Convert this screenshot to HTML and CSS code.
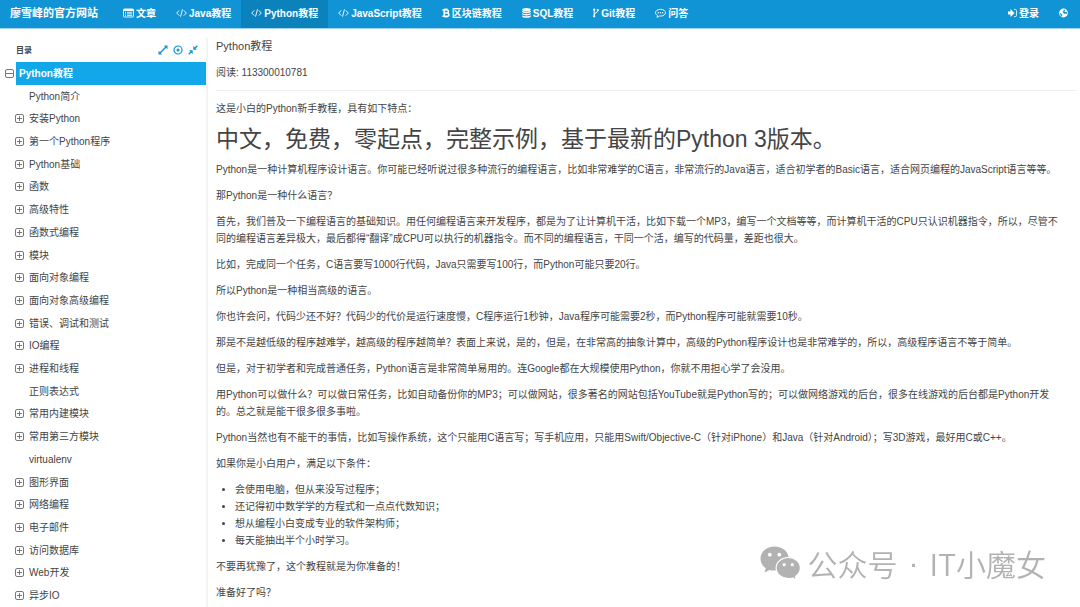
FILE: index.html
```html
<!DOCTYPE html>
<html lang="zh-CN">
<head>
    <meta charset="UTF-8">
    <meta name="viewport" content="width=device-width, initial-scale=1.0">
    <title>Python教程 - 廖雪峰的官方网站</title>
    <link rel="stylesheet" href="styles.css">
</head>
<body>
    <!-- Icon definitions -->
    <svg class="icon-defs" aria-hidden="true">
        <symbol id="icon-plus" viewBox="0 0 9 9">
            <rect x="0.5" y="0.5" width="8" height="8" rx="1.5" fill="none" stroke="currentColor"/>
            <path d="M2 4.5h5M4.5 2v5" stroke="currentColor"/>
        </symbol>
        <symbol id="icon-minus" viewBox="0 0 9 9">
            <rect x="0.5" y="0.5" width="8" height="8" rx="1.5" fill="none" stroke="currentColor"/>
            <path d="M1 4.5h7" stroke="currentColor"/>
        </symbol>
        <symbol id="icon-code" viewBox="0 0 11 10">
            <path d="M3.2 2.4L0.7 5l2.5 2.6M7.8 2.4L10.3 5L7.8 7.6M6.5 1.3l-2 7.4" fill="none" stroke="currentColor" stroke-width="0.9"/>
        </symbol>
    </svg>

    <header class="navbar">
        <a href="#" class="brand">廖雪峰的官方网站</a>
        <nav class="nav">
            <a href="#" class="nav-link">
                <svg class="icon" width="11" height="10" viewBox="0 0 11 10"><rect x="0.5" y="1" width="10" height="8" rx="0.8" fill="none" stroke="currentColor" stroke-width="0.9"/><path d="M0.5 2h10" stroke="currentColor" stroke-width="2"/><path d="M2 4.4h1M2 5.9h1M2 7.4h1M4 4.4h5.2M4 5.9h5.2M4 7.4h5.2" stroke="currentColor" stroke-width="0.8"/></svg>
                文章
            </a>
            <a href="#" class="nav-link"><svg class="icon" width="11" height="10"><use href="#icon-code"/></svg>Java教程</a>
            <a href="#" class="nav-link active"><svg class="icon" width="11" height="10"><use href="#icon-code"/></svg>Python教程</a>
            <a href="#" class="nav-link"><svg class="icon" width="11" height="10"><use href="#icon-code"/></svg>JavaScript教程</a>
            <a href="#" class="nav-link">
                <svg class="icon" width="8" height="10" viewBox="0 0 8 10"><path d="M0.4 2h4.2c2.5 0 2.5 2.8 0.3 3c2.7 0.1 2.7 3.3 0 3.3H0.4M2.2 2v6M2.4 5h2.6M3 0.5v1.5M4.8 0.5v1.5M3 8v1.6M4.8 8v1.6" fill="none" stroke="currentColor" stroke-width="1.5"/></svg>
                区块链教程
            </a>
            <a href="#" class="nav-link">
                <svg class="icon" width="9" height="10" viewBox="0 0 9 10"><ellipse cx="4.5" cy="1.6" rx="4.3" ry="1.6" fill="currentColor"/><path d="M0.2 2.6c1.6 1.4 7 1.4 8.6 0v1.2c0 1.9-8.6 1.9-8.6 0zM0.2 4.9c1.6 1.4 7 1.4 8.6 0v1.2c0 1.9-8.6 1.9-8.6 0zM0.2 7.2c1.6 1.4 7 1.4 8.6 0v1.2c0 1.9-8.6 1.9-8.6 0z" fill="currentColor"/></svg>
                SQL教程
            </a>
            <a href="#" class="nav-link">
                <svg class="icon" width="6" height="10" viewBox="0 0 6 10"><path d="M1.2 2v6M4.8 2.2c0 3-3.6 2.3-3.6 4.7" fill="none" stroke="currentColor" stroke-width="1"/><circle cx="1.2" cy="1.7" r="1.1" fill="currentColor"/><circle cx="4.8" cy="2" r="1.1" fill="currentColor"/><circle cx="1.2" cy="8.3" r="1.1" fill="currentColor"/></svg>
                Git教程
            </a>
            <a href="#" class="nav-link">
                <svg class="icon" width="11" height="10" viewBox="0 0 11 10"><path d="M5.5 1.3c2.8 0 5 1.5 5 3.4s-2.2 3.4-5 3.4l-1-0.1C3.7 8.7 2.8 9 1.8 9.2c0.5-0.5 0.8-1 0.8-1.7C1.3 6.9 0.5 5.9 0.5 4.7c0-1.9 2.2-3.4 5-3.4z" fill="none" stroke="currentColor" stroke-width="0.9"/><circle cx="3.3" cy="4.7" r="0.7" fill="currentColor"/><circle cx="5.5" cy="4.7" r="0.7" fill="currentColor"/><circle cx="7.7" cy="4.7" r="0.7" fill="currentColor"/></svg>
                问答
            </a>
        </nav>
        <nav class="nav nav-right">
            <a href="#" class="nav-link">
                <svg class="icon" width="9" height="10" viewBox="0 0 9 10"><path d="M0 3.4h2.5V1L6.5 5L2.5 9V6.6H0z" fill="currentColor"/><path d="M6 1.4h1.2c0.9 0 1.3 0.4 1.3 1.3v4.6c0 0.9-0.4 1.3-1.3 1.3H6" fill="none" stroke="currentColor" stroke-width="0.8"/></svg>
                登录
            </a>
            <a href="#" class="nav-link" aria-label="Language">
                <svg class="icon" width="9" height="10" viewBox="0 0 9 10"><circle cx="4.5" cy="5" r="4.4" fill="currentColor"/><path d="M5.3 1.5l1 0.6l-0.9 1.3l0.5 0.7l1.5-0.3l0.7 0.9l-0.3 1.2l-1.3-0.5l-1.6 0.6l-0.2-1l-1-0.6l0.7-1.7zM0.9 4.7l1.6 1l0.9 1.2l-0.5 1.5l-1.4-1.1z" class="globe-sea"/></svg>
            </a>
        </nav>
    </header>

    <div class="page">
        <aside class="sidebar">
            <div class="sidebar-header">
                <h4>目录</h4>
                <button type="button" class="tool" aria-label="展开">
                    <svg width="10" height="10" viewBox="0 0 10 10"><path d="M2 8l6-6" stroke="currentColor" stroke-width="1.4"/><path d="M5.8 0.5h3.7v3.7zM0.5 5.8v3.7h3.7z" fill="currentColor"/></svg>
                </button>
                <button type="button" class="tool" aria-label="定位">
                    <svg width="10" height="10" viewBox="0 0 10 10"><circle cx="5" cy="5" r="4" fill="none" stroke="currentColor" stroke-width="1.2"/><circle cx="5" cy="5" r="1.5" fill="currentColor"/></svg>
                </button>
                <button type="button" class="tool" aria-label="收起">
                    <svg width="10" height="10" viewBox="0 0 10 10"><path d="M0.7 9.3l3-3M9.3 0.7l-3 3" stroke="currentColor" stroke-width="1.4"/><path d="M5.3 1v3.7H9zM1 5.3h3.7V9z" fill="currentColor"/></svg>
                </button>
            </div>
            <ul class="tree">
                <li class="root"><button type="button" class="toggle" aria-label="收起"><svg width="9" height="9"><use href="#icon-minus"/></svg></button><a href="#">Python教程</a></li>
                <li class="leaf"><a href="#">Python简介</a></li>
                <li><button type="button" class="toggle" aria-label="展开"><svg width="9" height="9"><use href="#icon-plus"/></svg></button><a href="#">安装Python</a></li>
                <li><button type="button" class="toggle" aria-label="展开"><svg width="9" height="9"><use href="#icon-plus"/></svg></button><a href="#">第一个Python程序</a></li>
                <li><button type="button" class="toggle" aria-label="展开"><svg width="9" height="9"><use href="#icon-plus"/></svg></button><a href="#">Python基础</a></li>
                <li><button type="button" class="toggle" aria-label="展开"><svg width="9" height="9"><use href="#icon-plus"/></svg></button><a href="#">函数</a></li>
                <li><button type="button" class="toggle" aria-label="展开"><svg width="9" height="9"><use href="#icon-plus"/></svg></button><a href="#">高级特性</a></li>
                <li><button type="button" class="toggle" aria-label="展开"><svg width="9" height="9"><use href="#icon-plus"/></svg></button><a href="#">函数式编程</a></li>
                <li><button type="button" class="toggle" aria-label="展开"><svg width="9" height="9"><use href="#icon-plus"/></svg></button><a href="#">模块</a></li>
                <li><button type="button" class="toggle" aria-label="展开"><svg width="9" height="9"><use href="#icon-plus"/></svg></button><a href="#">面向对象编程</a></li>
                <li><button type="button" class="toggle" aria-label="展开"><svg width="9" height="9"><use href="#icon-plus"/></svg></button><a href="#">面向对象高级编程</a></li>
                <li><button type="button" class="toggle" aria-label="展开"><svg width="9" height="9"><use href="#icon-plus"/></svg></button><a href="#">错误、调试和测试</a></li>
                <li><button type="button" class="toggle" aria-label="展开"><svg width="9" height="9"><use href="#icon-plus"/></svg></button><a href="#">IO编程</a></li>
                <li><button type="button" class="toggle" aria-label="展开"><svg width="9" height="9"><use href="#icon-plus"/></svg></button><a href="#">进程和线程</a></li>
                <li class="leaf"><a href="#">正则表达式</a></li>
                <li><button type="button" class="toggle" aria-label="展开"><svg width="9" height="9"><use href="#icon-plus"/></svg></button><a href="#">常用内建模块</a></li>
                <li><button type="button" class="toggle" aria-label="展开"><svg width="9" height="9"><use href="#icon-plus"/></svg></button><a href="#">常用第三方模块</a></li>
                <li class="leaf"><a href="#">virtualenv</a></li>
                <li><button type="button" class="toggle" aria-label="展开"><svg width="9" height="9"><use href="#icon-plus"/></svg></button><a href="#">图形界面</a></li>
                <li><button type="button" class="toggle" aria-label="展开"><svg width="9" height="9"><use href="#icon-plus"/></svg></button><a href="#">网络编程</a></li>
                <li><button type="button" class="toggle" aria-label="展开"><svg width="9" height="9"><use href="#icon-plus"/></svg></button><a href="#">电子邮件</a></li>
                <li><button type="button" class="toggle" aria-label="展开"><svg width="9" height="9"><use href="#icon-plus"/></svg></button><a href="#">访问数据库</a></li>
                <li><button type="button" class="toggle" aria-label="展开"><svg width="9" height="9"><use href="#icon-plus"/></svg></button><a href="#">Web开发</a></li>
                <li><button type="button" class="toggle" aria-label="展开"><svg width="9" height="9"><use href="#icon-plus"/></svg></button><a href="#">异步IO</a></li>
            </ul>
        </aside>

        <main class="content">
            <h4 class="title">Python教程</h4>
            <p>阅读: 113300010781</p>
            <hr>
            <article class="article">
                <p>这是小白的Python新手教程，具有如下特点：</p>
                <h1>中文，免费，零起点，完整示例，基于最新的Python 3版本。</h1>
                <p>Python是一种计算机程序设计语言。你可能已经听说过很多种流行的编程语言，比如非常难学的C语言，非常流行的Java语言，适合初学者的Basic语言，适合网页编程的JavaScript语言等等。</p>
                <p>那Python是一种什么语言？</p>
                <p>首先，我们普及一下编程语言的基础知识。用任何编程语言来开发程序，都是为了让计算机干活，比如下载一个MP3，编写一个文档等等，而计算机干活的CPU只认识机器指令，所以，尽管不同的编程语言差异极大，最后都得“翻译”成CPU可以执行的机器指令。而不同的编程语言，干同一个活，编写的代码量，差距也很大。</p>
                <p>比如，完成同一个任务，C语言要写1000行代码，Java只需要写100行，而Python可能只要20行。</p>
                <p>所以Python是一种相当高级的语言。</p>
                <p>你也许会问，代码少还不好？代码少的代价是运行速度慢，C程序运行1秒钟，Java程序可能需要2秒，而Python程序可能就需要10秒。</p>
                <p>那是不是越低级的程序越难学，越高级的程序越简单？表面上来说，是的，但是，在非常高的抽象计算中，高级的Python程序设计也是非常难学的，所以，高级程序语言不等于简单。</p>
                <p>但是，对于初学者和完成普通任务，Python语言是非常简单易用的。连Google都在大规模使用Python，你就不用担心学了会没用。</p>
                <p>用Python可以做什么？可以做日常任务，比如自动备份你的MP3；可以做网站，很多著名的网站包括YouTube就是Python写的；可以做网络游戏的后台，很多在线游戏的后台都是Python开发的。总之就是能干很多很多事啦。</p>
                <p>Python当然也有不能干的事情，比如写操作系统，这个只能用C语言写；写手机应用，只能用Swift/Objective-C（针对iPhone）和Java（针对Android）；写3D游戏，最好用C或C++。</p>
                <p>如果你是小白用户，满足以下条件：</p>
                <ul>
                    <li>会使用电脑，但从来没写过程序；</li>
                    <li>还记得初中数学学的方程式和一点点代数知识；</li>
                    <li>想从编程小白变成专业的软件架构师；</li>
                    <li>每天能抽出半个小时学习。</li>
                </ul>
                <p>不要再犹豫了，这个教程就是为你准备的！</p>
                <p>准备好了吗？</p>
            </article>
        </main>
    </div>

    <!-- Watermark over the page -->
    <div class="watermark">
        <svg width="41" height="34" viewBox="0 0 41 34">
            <path d="M14.5 0.5C6.7 0.5 0.5 5.9 0.5 12.7c0 3.9 2 7.2 5.2 9.5L4.5 26.5l5-2.6c1.6 0.5 3.3 0.7 5 0.7c8 0 14.3-5.2 14.3-12S22.5 0.5 14.5 0.5z" fill="currentColor"/>
            <path d="M28.3 11.5c-6.8 0-12.2 4.7-12.2 10.6s5.4 10.5 12.2 10.5c1.5 0 2.9-0.2 4.2-0.6l4 2l-1-3.5c3-2 4.9-5 4.9-8.4c0-5.9-5.3-10.6-12.1-10.6z" fill="currentColor" stroke="#fff" stroke-width="1.2"/>
            <g fill="#fff"><circle cx="9.8" cy="8.7" r="1.9"/><circle cx="19.3" cy="8.7" r="1.9"/><circle cx="24.2" cy="18.7" r="1.6"/><circle cx="32.3" cy="18.7" r="1.6"/></g>
        </svg>
        <div class="account">
            <span>公众号</span>
            <span class="dot">·</span>
            <span>IT小魔女</span>
        </div>
    </div>
</body>
</html>
```
FILE: styles.css
```css
* {
    margin: 0;
    padding: 0;
    box-sizing: border-box;
}

body {
    display: flex;
    flex-direction: column;
    min-height: 100vh;
    font-family: "Liberation Sans", "Noto Sans CJK SC", sans-serif;
    font-size: 10px;
    line-height: 17px;
    color: #444;
    background: #fff;
}

a {
    color: inherit;
    text-decoration: none;
}

button {
    border: none;
    background: none;
    color: inherit;
    cursor: pointer;
}

svg {
    display: block;
}

.icon-defs {
    display: none;
}

/* Navbar */
.navbar {
    display: flex;
    height: 29px;
    background: #1194d6;
    border-bottom: 1px solid #a3d3ee;
    color: #fff;
    font-weight: bold;
}

.brand {
    display: flex;
    align-items: center;
    padding: 0 15px 2px 10px;
    font-size: 11px;
}

.nav {
    display: flex;
}

.nav-right {
    margin-left: auto;
    padding-right: 2px;
}

.nav-link {
    display: flex;
    align-items: center;
    gap: 2px;
    padding: 0 10px 2px;
}

.nav-link:hover,
.nav-link.active {
    background: #0c82bc;
}

.globe-sea {
    fill: #1194d6;
}

/* Layout */
.page {
    display: flex;
    flex: 1;
}

.sidebar {
    display: flex;
    flex-direction: column;
    width: 208px;
    flex-shrink: 0;
    padding-top: 9px;
}

.sidebar-header {
    display: flex;
    align-items: center;
    gap: 5px;
    height: 24px;
    padding: 0 8px 0 16px;
    border-right: 2px solid #f3f3f3;
}

.sidebar-header h4 {
    flex: 1;
    font-size: 8px;
}

.tool {
    color: #1194d6;
}

/* Table of contents */
.tree {
    display: grid;
    grid-auto-rows: 1fr;
    flex: 1;
    border-right: 2px solid #f3f3f3;
    list-style: none;
}

.tree li {
    display: flex;
    align-items: center;
    gap: 5px;
    padding-left: 15px;
}

.tree .leaf {
    padding-left: 29px;
}

.tree .root {
    gap: 2px;
    padding-left: 5px;
}

.toggle {
    color: #777;
}

.root a {
    display: flex;
    flex: 1;
    align-items: center;
    height: 100%;
    padding-left: 3px;
    background: #12a7e8;
    color: #fff;
    font-weight: bold;
}

/* Content */
.content {
    flex: 1;
    padding: 9px 3px 0 8px;
}

.content p,
.content ul {
    margin-bottom: 9px;
}

.title {
    margin-bottom: 9px;
    font-size: 11px;
    font-weight: normal;
}

hr {
    height: 1px;
    margin-bottom: 9px;
    border: none;
    background: #eee;
}

.article {
    padding-right: 16px;
}

.article h1 {
    margin-bottom: 9px;
    font-size: 23px;
    font-weight: normal;
    line-height: 26px;
}

.article ul {
    padding-left: 19px;
}

.article p:last-child {
    margin-bottom: 0;
}

.watermark {
    position: fixed;
    right: 34px;
    bottom: 24px;
    display: flex;
    align-items: center;
    gap: 7px;
    color: #b2b2b2;
    font-family: "Noto Sans CJK SC", sans-serif;
    font-size: 30px;
    font-weight: 350;
    line-height: 40px;
}

.account {
    display: flex;
    gap: 11px;
}

.dot {
    font-family: "Liberation Sans", sans-serif;
}
```
